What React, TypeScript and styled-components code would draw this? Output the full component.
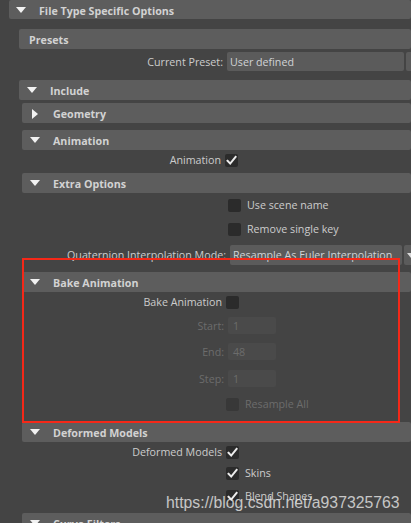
import React from "react";
import styled, { createGlobalStyle } from "styled-components";

const Global = createGlobalStyle`
  html, body { margin: 0; padding: 0; background: #444444; }
  body { font-family: "Open Sans", "Noto Sans", sans-serif; }
`;

const Root = styled.div`
  position: relative;
  width: 411px;
  height: 523px;
  overflow: hidden;
  background: #444444;
  padding-left: 9px;
  box-sizing: border-box;
  font-family: "Open Sans", "Noto Sans", sans-serif;
  font-size: 10.7px;
  color: #cccccc;
`;

const Stack = styled.div<{ $indent?: number }>`
  display: flex;
  flex-direction: column;
  padding-left: ${(p) => p.$indent ?? 0}px;
`;

const Header = styled.div<{ $top?: number; $h?: number }>`
  display: flex;
  align-items: center;
  box-sizing: border-box;
  height: ${(p) => p.$h ?? 20}px;
  padding-top: 2px;
  margin-top: ${(p) => p.$top ?? 0}px;
  background: #5d5d5d;
  border-radius: 2px;
  font-weight: 700;
  font-size: 10.7px;
  color: #d2d2d2;
  white-space: nowrap;
`;

const Arrow = styled.span<{ $open: boolean; $pad: number }>`
  display: inline-block;
  width: 0;
  height: 0;
  margin-left: ${(p) => p.$pad}px;
  margin-right: ${(p) => (p.$open ? 13 : 15)}px;
  ${(p) =>
    p.$open
      ? `border-left: 5px solid transparent; border-right: 5px solid transparent; border-top: 6px solid #f2f2f2; margin-top: -2px;`
      : `border-top: 5px solid transparent; border-bottom: 5px solid transparent; border-left: 6px solid #f2f2f2; margin-left: ${p.$pad + 2}px; margin-top: -1px;`}
`;

const Row = styled.div<{ $top?: number; $h?: number }>`
  display: flex;
  align-items: center;
  height: ${(p) => p.$h ?? 20}px;
  margin-top: ${(p) => p.$top ?? 0}px;
  white-space: nowrap;
`;

const Label = styled.span<{ $w: number; $dim?: boolean }>`
  width: ${(p) => p.$w}px;
  flex: none;
  text-align: right;
  padding-right: 4px;
  box-sizing: border-box;
  color: ${(p) => (p.$dim ? "#6c6c6c" : "#cccccc")};
`;

const Spacer = styled.span<{ $w: number }>`
  width: ${(p) => p.$w}px;
  flex: none;
`;

const Box = styled.span<{ $disabled?: boolean }>`
  display: inline-flex;
  align-items: center;
  justify-content: center;
  width: 13px;
  height: 13px;
  flex: none;
  border-radius: 2px;
  background: ${(p) => (p.$disabled ? "#383838" : "#2b2b2b")};
`;

const BoxText = styled.span<{ $dim?: boolean }>`
  margin-left: 6px;
  color: ${(p) => (p.$dim ? "#6c6c6c" : "#cccccc")};
`;

const Field = styled.div<{ $w: number; $h?: number; $disabled?: boolean }>`
  display: flex;
  align-items: center;
  width: ${(p) => p.$w}px;
  height: ${(p) => p.$h ?? 19}px;
  flex: none;
  box-sizing: border-box;
  padding-left: ${(p) => (p.$disabled ? 5 : 3)}px;
  border-radius: 2px;
  background: ${(p) => (p.$disabled ? "#4a4a4a" : "#5b5b5b")};
  color: ${(p) => (p.$disabled ? "#6c6c6c" : "#d0d3d6")};
  overflow: hidden;
`;

const DropButton = styled.div<{ $h?: number }>`
  display: flex;
  align-items: center;
  width: 24px;
  height: ${(p) => p.$h ?? 19}px;
  flex: none;
  margin-left: 2px;
  border-radius: 2px;
  background: #5b5b5b;
  padding-left: 3px;
  box-sizing: border-box;
`;

const DropArrow = styled.span`
  width: 0;
  height: 0;
  border-left: 4px solid transparent;
  border-right: 4px solid transparent;
  border-top: 5px solid #d8d8d8;
`;

const RedBox = styled.div`
  position: absolute;
  left: 22px;
  top: 258px;
  width: 378px;
  height: 165px;
  box-sizing: border-box;
  border: 2px solid #f52818;
  pointer-events: none;
`;

const Watermark = styled.div`
  position: absolute;
  left: 166px;
  top: 494px;
  font-family: "Liberation Sans", Arial, sans-serif;
  font-size: 15.8px;
  line-height: 18px;
  color: rgba(236, 236, 236, 0.78);
  white-space: nowrap;
  pointer-events: none;
`;

const Check = () => (
  <svg width="11" height="11" viewBox="0 0 11 11">
    <path d="M1.5 5.8 L4.2 8.6 L9.6 1.8" fill="none" stroke="#ececec" strokeWidth="2" strokeLinecap="square" />
  </svg>
);

const CheckBox: React.FC<{ checked?: boolean; disabled?: boolean }> = ({ checked, disabled }) => (
  <Box $disabled={disabled}>{checked ? <Check /> : null}</Box>
);

const FrameHeader: React.FC<{ title: string; open?: boolean; top?: number; h?: number; pad?: number }> = ({
  title,
  open = true,
  top,
  h,
  pad = 8,
}) => (
  <Header $top={top} $h={h}>
    <Arrow $open={open} $pad={pad} />
    {title}
  </Header>
);

export default function App() {
  return (
    <Root>
      <Global />
      <Stack>
        <FrameHeader title="File Type Specific Options" h={19} pad={7} />
        <Stack $indent={10}>
          <Header $top={10}>
            <Spacer $w={10} />
            Presets
          </Header>
          <Row $top={3} $h={19}>
            <Label $w={208}>Current Preset:</Label>
            <Field $w={177}>User defined</Field>
            <DropButton />
          </Row>
          <FrameHeader title="Include" top={9} pad={8} />
          <Stack $indent={3}>
            <FrameHeader title="Geometry" open={false} top={3} pad={8} />
            <FrameHeader title="Animation" top={7} pad={8} />
            <Row>
              <Label $w={203}>Animation</Label>
              <CheckBox checked />
            </Row>
            <FrameHeader title="Extra Options" top={3} pad={8} />
            <Row $top={2}>
              <Spacer $w={206} />
              <CheckBox />
              <BoxText>Use scene name</BoxText>
            </Row>
            <Row $top={4}>
              <Spacer $w={206} />
              <CheckBox />
              <BoxText>Remove single key</BoxText>
            </Row>
            <Row $top={6}>
              <Label $w={208}>Quaternion Interpolation Mode:</Label>
              <Field $w={172} $h={20}>Resample As Euler Interpolation</Field>
              <DropButton $h={20}>
                <DropArrow />
              </DropButton>
            </Row>
            <FrameHeader title="Bake Animation" top={7} pad={8} />
            <Row>
              <Label $w={204}>Bake Animation</Label>
              <CheckBox />
            </Row>
            <Row $top={5} $h={17}>
              <Label $w={206} $dim>Start:</Label>
              <Field $w={48} $h={17} $disabled>1</Field>
            </Row>
            <Row $top={9} $h={17}>
              <Label $w={206} $dim>End:</Label>
              <Field $w={48} $h={17} $disabled>48</Field>
            </Row>
            <Row $top={10} $h={17}>
              <Label $w={206} $dim>Step:</Label>
              <Field $w={48} $h={17} $disabled>1</Field>
            </Row>
            <Row $top={7}>
              <Spacer $w={204} />
              <CheckBox disabled />
              <BoxText $dim>Resample All</BoxText>
            </Row>
            <FrameHeader title="Deformed Models" top={8} pad={8} />
            <Row>
              <Label $w={204}>Deformed Models</Label>
              <CheckBox checked />
            </Row>
            <Row $top={1}>
              <Spacer $w={204} />
              <CheckBox checked />
              <BoxText>Skins</BoxText>
            </Row>
            <Row $top={3}>
              <Spacer $w={204} />
              <CheckBox checked />
              <BoxText>Blend Shapes</BoxText>
            </Row>
            <FrameHeader title="Curve Filters" top={7} pad={8} />
          </Stack>
        </Stack>
      </Stack>
      <RedBox />
      <Watermark>https://blog.csdn.net/a937325763</Watermark>
    </Root>
  );
}
